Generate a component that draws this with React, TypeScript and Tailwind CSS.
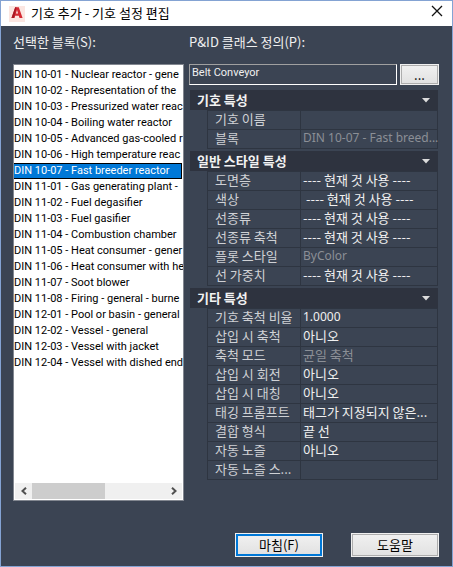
import React, { useState } from 'react';

interface PropertyRow {
  label: string;
  value: string;
  disabled?: boolean;
  latin?: boolean;
}

interface PropertyGroup {
  title: string;
  rows: PropertyRow[];
}

const blocks = [
  'DIN 10-01 - Nuclear reactor - gene',
  'DIN 10-02 - Representation of the',
  'DIN 10-03 - Pressurized water reac',
  'DIN 10-04 - Boiling water reactor',
  'DIN 10-05 - Advanced gas-cooled r',
  'DIN 10-06 - High temperature reac',
  'DIN 10-07 - Fast breeder reactor',
  'DIN 11-01 - Gas generating plant -',
  'DIN 11-02 - Fuel degasifier',
  'DIN 11-03 - Fuel gasifier',
  'DIN 11-04 - Combustion chamber',
  'DIN 11-05 - Heat consumer - gener',
  'DIN 11-06 - Heat consumer with he',
  'DIN 11-07 - Soot blower',
  'DIN 11-08 - Firing - general - burne',
  'DIN 12-01 - Pool or basin - general',
  'DIN 12-02 - Vessel - general',
  'DIN 12-03 - Vessel with jacket',
  'DIN 12-04 - Vessel with dished end',
];

const USE_CURRENT = '---- 현재 것 사용 ----';

const groups: PropertyGroup[] = [
  {
    title: '기호 특성',
    rows: [
      { label: '기호 이름', value: '' },
      { label: '블록', value: 'DIN 10-07 - Fast breed...', disabled: true, latin: true },
    ],
  },
  {
    title: '일반 스타일 특성',
    rows: [
      { label: '도면층', value: USE_CURRENT },
      { label: '색상', value: '\u00a0' + USE_CURRENT },
      { label: '선종류', value: USE_CURRENT },
      { label: '선종류 축척', value: USE_CURRENT },
      { label: '플롯 스타일', value: 'ByColor', disabled: true, latin: true },
      { label: '선 가중치', value: USE_CURRENT },
    ],
  },
  {
    title: '기타 특성',
    rows: [
      { label: '기호 축척 비율', value: '1.0000', latin: true },
      { label: '삽입 시 축척', value: '아니오' },
      { label: '축척 모드', value: '균일 축척', disabled: true },
      { label: '삽입 시 회전', value: '아니오' },
      { label: '삽입 시 대칭', value: '아니오' },
      { label: '태깅 프롬프트', value: '태그가 지정되지 않은...' },
      { label: '결합 형식', value: '끝 선' },
      { label: '자동 노즐', value: '아니오' },
      { label: '자동 노즐 스...', value: '' },
    ],
  },
];

const AppLogo = () => (
  <svg width="16" height="16" viewBox="0 0 16 16" aria-hidden="true">
    <rect width="16" height="16" fill="#fbe6e1" />
    <path d="M2.5 12 6.2 1.2h3.6L13.6 12h-3.1l-.7-2.2H6.2L5.5 12z" fill="#d42a33" />
    <path d="M6.9 7.6h2.2L8 4z" fill="#fbe6e1" />
    <path d="M2.5 12 6.2 1.2h1.3L5 12z" fill="#a81a25" />
  </svg>
);

const TitleBar = () => (
  <header className="flex h-[25px] shrink-0 items-center bg-white pl-2 pr-[9px]">
    <AppLogo />
    <h1 className="ml-[6px] flex-1 pb-px text-[13px] leading-5 text-black">기호 추가 - 기호 설정 편집</h1>
    <button aria-label="닫기" className="flex h-5 w-3 items-center justify-center self-start">
      <svg width="12" height="12" viewBox="0 0 12 12" stroke="#111" strokeWidth="1.3" fill="none">
        <path d="M1 1l10 10M11 1L1 11" />
      </svg>
    </button>
  </header>
);

const BlockList = () => {
  const [selected, setSelected] = useState(6);

  return (
    <div className="flex min-w-0 flex-1 flex-col border border-[#828790] bg-white">
      <ul role="listbox" aria-labelledby="blocks-label" className="min-h-0 flex-1 overflow-hidden pt-[2px]">
        {blocks.map((block, i) => (
          <li
            key={block}
            role="option"
            aria-selected={i === selected}
            onClick={() => setSelected(i)}
            className={
              i === selected
                ? 'mr-px h-4 whitespace-nowrap border-y border-r border-black bg-[#0078d7] text-white'
                : 'h-4 whitespace-nowrap border-y border-transparent text-black'
            }
          >
            <span className="block font-[Roboto,'Noto_Sans',sans-serif] text-[11px] leading-[14px]">{block}</span>
          </li>
        ))}
      </ul>
      <div className="m-px flex h-4 shrink-0 bg-[#f0f0f0]">
        <button aria-label="왼쪽으로 스크롤" className="flex w-[17px] items-center justify-center">
          <svg width="8" height="8" viewBox="0 0 8 8" fill="none" stroke="#505050" strokeWidth="2">
            <path d="M6 .8 2.5 4 6 7.2" />
          </svg>
        </button>
        <div className="flex-1">
          <div className="h-full w-[55%] bg-[#cdcdcd]" />
        </div>
        <button aria-label="오른쪽으로 스크롤" className="flex w-[17px] items-center justify-center">
          <svg width="8" height="8" viewBox="0 0 8 8" fill="none" stroke="#505050" strokeWidth="2">
            <path d="M2 .8 5.5 4 2 7.2" />
          </svg>
        </button>
      </div>
    </div>
  );
};

const PropertySection: React.FC<{ group: PropertyGroup }> = ({ group }) => {
  const [open, setOpen] = useState(true);

  return (
    <section>
      <button
        onClick={() => setOpen(!open)}
        aria-expanded={open}
        className="flex h-5 w-full items-center justify-between bg-[#2e333f] pl-[7px] pr-2 text-[13px] leading-5 font-bold text-[#f2f2f2]"
      >
        {group.title}
        <svg width="8" height="5" viewBox="0 0 8 5" aria-hidden="true">
          <path d="M0 0h8L4 4.5z" fill="#dcdcdc" />
        </svg>
      </button>
      {open && (
        <div className="pl-[17px]">
          <table className="w-full table-fixed border-collapse text-[13px] leading-4">
            <tbody>
              {group.rows.map((row) => (
                <tr key={row.label} className="h-[19px] align-top">
                  <th
                    scope="row"
                    className="w-[93px] whitespace-nowrap border border-[#2e3541] p-0 pl-[7px] text-left font-normal text-[#cfd1d5]"
                  >
                    {row.label}
                  </th>
                  <td
                    className={
                      row.disabled
                        ? 'whitespace-nowrap border border-[#2e3541] p-0 pl-[2px] text-[#8b8f96]'
                        : 'whitespace-nowrap border border-[#2e3541] p-0 pl-[2px] text-[#f0f0f0]'
                    }
                  >
                    {row.latin ? (
                      <span className="block font-['Noto_Sans',sans-serif] text-[12px] leading-4">{row.value}</span>
                    ) : (
                      row.value
                    )}
                  </td>
                </tr>
              ))}
            </tbody>
          </table>
        </div>
      )}
    </section>
  );
};

export default function App() {
  return (
    <div className="flex min-h-screen flex-col border border-[#84a3d3] bg-[#3b4453] font-['Noto_Sans_CJK_KR',sans-serif]">
      <TitleBar />
      <main className="flex flex-1 gap-[5px] pl-3 pr-[13px] pt-[6px]">
        <div className="flex min-w-0 flex-[171] flex-col">
          <span id="blocks-label" className="mb-3 text-[13px] leading-5 text-[#f0f0f0]">
            선택한 블록(S):
          </span>
          <BlockList />
        </div>
        <div className="flex min-w-0 flex-[250] flex-col">
          <label htmlFor="class-definition" className="mb-3 text-[13px] leading-5 text-[#f0f0f0]">
            P&amp;ID 클래스 정의(P):
          </label>
          <div className="flex gap-[3px]">
            <input
              id="class-definition"
              readOnly
              defaultValue="Belt Conveyor"
              className="h-[21px] min-w-0 flex-1 border border-white border-t-[#a0a0a0] border-l-[#a0a0a0] bg-transparent px-[2px] pb-1 font-[Roboto,'Noto_Sans',sans-serif] text-[11px] leading-4 text-[#f0f0f0] outline-none"
            />
            <button className="flex h-[21px] w-[39px] items-center justify-center border border-[#f0f0f0] bg-[#adadad] p-px text-[13px] leading-[17px] text-black">
              <span className="w-full bg-linear-to-b from-[#f0f0f0] to-[#e2e2e2]">...</span>
            </button>
          </div>
          <div className="mt-[5px] flex flex-col gap-[2px] pl-px pr-px">
            {groups.map((group) => (
              <PropertySection key={group.title} group={group} />
            ))}
          </div>
        </div>
      </main>
      <footer className="flex justify-end gap-7 pb-[9px] pl-3 pr-[13px] pt-8">
        <button className="h-6 w-[88px] border border-[#f0f0f0] bg-[#0078d7] p-[2px] text-[13px] leading-[18px] text-black">
          <span className="block bg-linear-to-b from-[#f0f0f0] to-[#e2e2e2]">마침(F)</span>
        </button>
        <button className="h-6 w-[88px] border border-[#f0f0f0] bg-[#adadad] p-px text-[13px] leading-5 text-black">
          <span className="block bg-linear-to-b from-[#f0f0f0] to-[#e2e2e2]">도움말</span>
        </button>
      </footer>
    </div>
  );
}
